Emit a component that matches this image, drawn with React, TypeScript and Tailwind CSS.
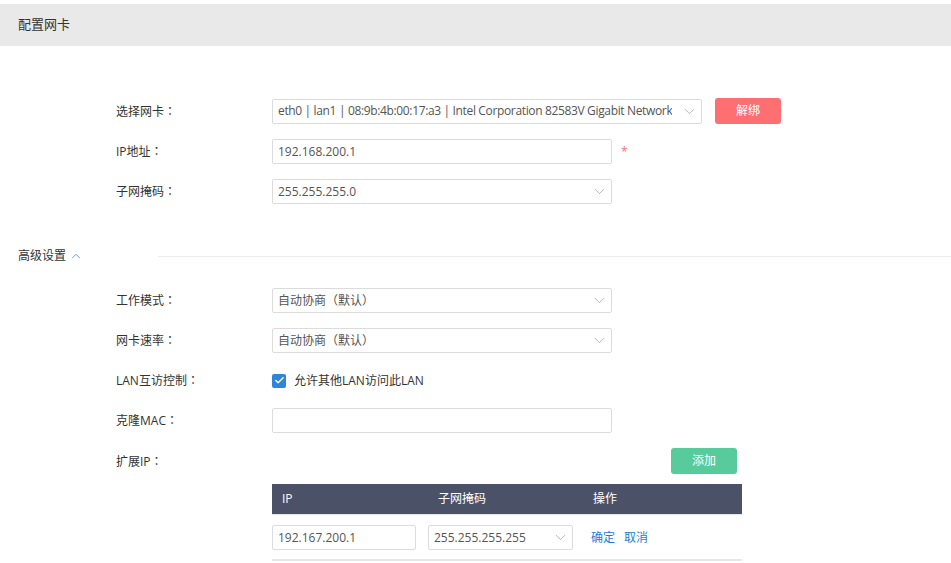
import { Check, ChevronDown, ChevronUp } from "lucide-react";

const font = "font-['Open_Sans','Noto_Sans_CJK_SC',sans-serif]";

function Label({ text }: { text: string }) {
  return (
    <div className="w-[156px] shrink-0 text-[12px] text-[#333]">
      {text}
      <span className="font-['Noto_Sans_CJK_TC',sans-serif]">：</span>
    </div>
  );
}

function Select({ value, width, tight }: { value: string; width: string; tight?: boolean }) {
  return (
    <div
      className={`flex h-[25px] items-center justify-between rounded-[2px] border border-[#dcdcdc] bg-white pl-[5px] pr-[3px] text-[12px] text-[#555] ${width}`}
    >
      <span className={`overflow-hidden whitespace-nowrap ${tight ? "tracking-[-0.35px]" : ""}`}>{value}</span>
      <ChevronDown className="h-[17px] w-[17px] shrink-0 text-[#999]" strokeWidth={1} />
    </div>
  );
}

function Input({ value, width }: { value?: string; width: string }) {
  return (
    <div
      className={`flex h-[25px] items-center rounded-[2px] border border-[#dcdcdc] bg-white px-[5px] text-[12px] text-[#555] ${width}`}
    >
      {value}
    </div>
  );
}

export default function App() {
  return (
    <div className={`h-[563px] w-[951px] overflow-hidden bg-white pt-[4px] ${font}`}>
      <div className="flex h-[42px] items-center bg-[#e9e9e9] pl-[18px] text-[13px] text-[#333]">
        配置网卡
      </div>

      <div className="mt-[52px] flex flex-col gap-[15px] pl-[116px]">
        <div className="flex items-center">
          <Label text="选择网卡" />
          <Select
            tight
            width="w-[430px]"
            value="eth0 | lan1 | 08:9b:4b:00:17:a3 | Intel Corporation 82583V Gigabit Network"
          />
          <button className="ml-[13px] h-[26px] w-[66px] rounded-[3px] bg-[#ff6f72] text-[12px] text-white">
            解绑
          </button>
        </div>
        <div className="flex items-center">
          <Label text="IP地址" />
          <Input width="w-[340px]" value="192.168.200.1" />
          <span className="ml-[9px] text-[12px] text-[#ff6f72]">*</span>
        </div>
        <div className="flex items-center">
          <Label text="子网掩码" />
          <Select width="w-[340px]" value="255.255.255.0" />
        </div>
      </div>

      <div className="mt-[43px] flex items-center">
        <div className="flex w-[158px] items-center pl-[18px] text-[12px] text-[#333]">
          高级设置
          <ChevronUp className="ml-[3px] h-[14px] w-[14px] text-[#4a90d9]" strokeWidth={1.5} />
        </div>
        <div className="h-px flex-1 bg-[#ececec]" />
      </div>

      <div className="mt-[23px] flex flex-col gap-[15px] pl-[116px]">
        <div className="flex items-center">
          <Label text="工作模式" />
          <Select width="w-[340px]" value="自动协商（默认）" />
        </div>
        <div className="flex items-center">
          <Label text="网卡速率" />
          <Select width="w-[340px]" value="自动协商（默认）" />
        </div>
        <div className="flex h-[25px] items-center">
          <Label text="LAN互访控制" />
          <span className="flex h-[14px] w-[14px] items-center justify-center rounded-[2px] bg-[#2f86d8]">
            <Check className="h-[11px] w-[11px] text-white" strokeWidth={3} />
          </span>
          <span className="ml-[8px] text-[12px] text-[#333]">允许其他LAN访问此LAN</span>
        </div>
        <div className="flex items-center">
          <Label text="克隆MAC" />
          <Input width="w-[340px]" />
        </div>
        <div className="flex items-center">
          <Label text="扩展IP" />
          <div className="flex w-[465px] justify-end">
            <button className="h-[26px] w-[66px] rounded-[3px] bg-[#57cb9b] text-[12px] text-white">
              添加
            </button>
          </div>
        </div>
      </div>

      <div className="ml-[272px] mt-[10px] w-[470px] text-[12px]">
        <div className="grid h-[30px] grid-cols-[156px_155px_1fr] items-center bg-[#4b5166] text-white">
          <div className="pl-[10px]">IP</div>
          <div className="pl-[10px]">子网掩码</div>
          <div className="pl-[10px]">操作</div>
        </div>
        <div className="h-px bg-[#e6e6e6]" />
        <div className="grid grid-cols-[156px_155px_1fr] items-center border-b-2 border-[#e6e6e6] pb-[9px] pt-[10px]">
          <Input width="w-[144px]" value="192.167.200.1" />
          <Select width="w-[145px]" value="255.255.255.255" />
          <div className="flex gap-[9px] pl-[8px] text-[#1a7fd4]">
            <span>确定</span>
            <span>取消</span>
          </div>
        </div>
      </div>
    </div>
  );
}
